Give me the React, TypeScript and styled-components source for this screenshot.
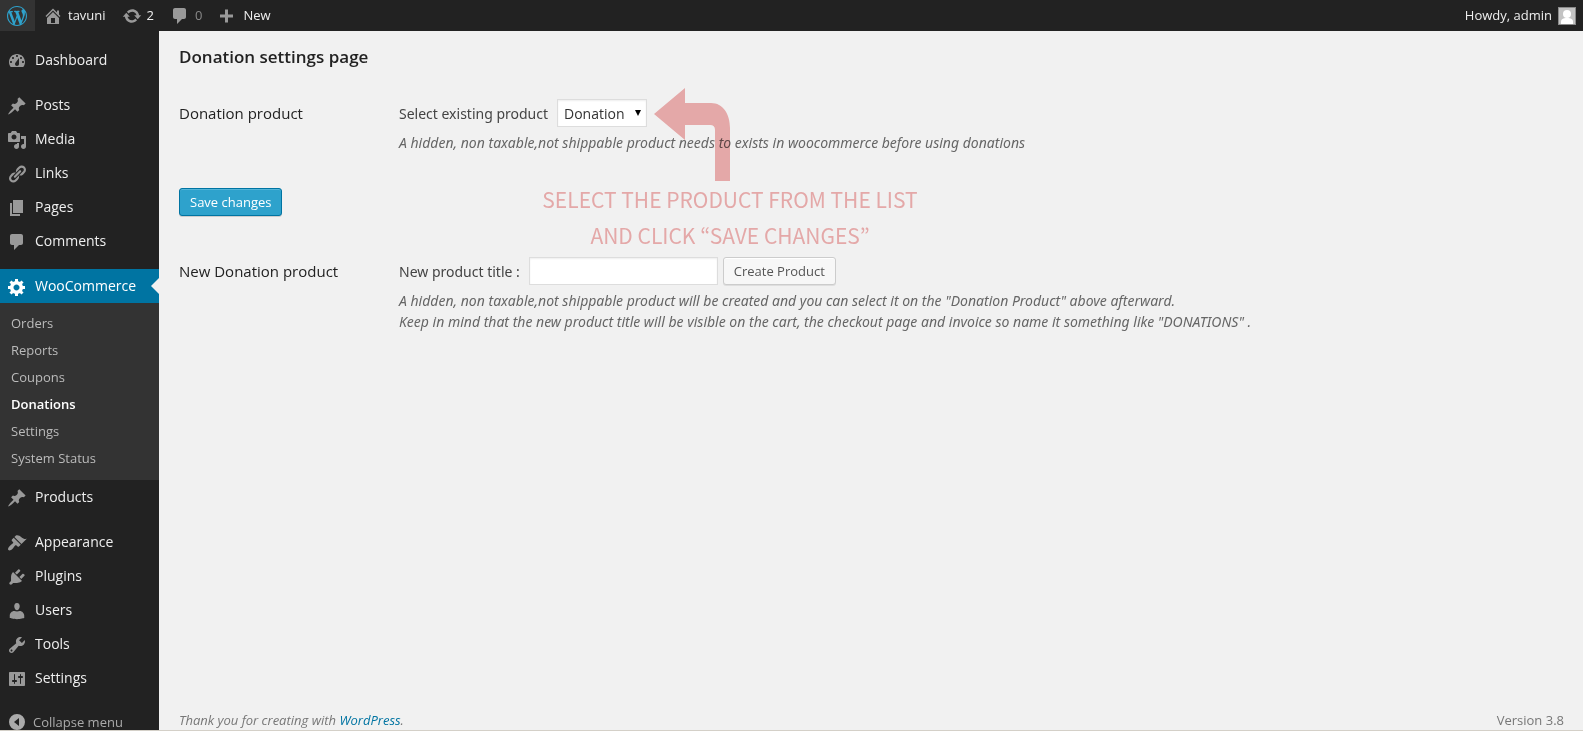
import React from "react";
import styled, { createGlobalStyle, css } from "styled-components";

const GlobalStyle = createGlobalStyle`
  *, *::before, *::after { box-sizing: border-box; }
  body {
    margin: 0;
    background: #f1f1f1;
    color: #444;
    font-family: "Open Sans", "Noto Sans", sans-serif;
    font-size: 14px;
    line-height: 21px;
  }
  a { text-decoration: none; }
  ul { list-style: none; margin: 0; padding: 0; }
`;

const paths = {
  wordpress:
    "M20 10c0-5.51-4.49-10-10-10C4.48 0 0 4.49 0 10c0 5.52 4.48 10 10 10 5.51 0 10-4.48 10-10zM7.78 15.37L4.37 6.22c.55-.02 1.17-.08 1.17-.08.5-.06.44-1.13-.06-1.11 0 0-1.45.11-2.37.11-.18 0-.37 0-.58-.01C4.12 2.69 6.87 1.11 10 1.11c2.33 0 4.45.87 6.05 2.34-.68-.11-1.65.39-1.65 1.58 0 .74.45 1.36.9 2.1.35.61.55 1.36.55 2.46 0 1.49-1.4 5-1.4 5l-3.03-8.37c.54-.02.82-.17.82-.17.5-.05.44-1.25-.06-1.22 0 0-1.44.12-2.38.12-.87 0-2.33-.12-2.33-.12-.5-.03-.56 1.2-.06 1.22l.92.08 1.26 3.41zM17.41 10c.24-.64.74-1.87.43-4.25.7 1.29 1.05 2.71 1.05 4.25 0 3.29-1.73 6.24-4.4 7.78.97-2.59 1.94-5.2 2.92-7.78zM6.1 18.09C3.12 16.65 1.11 13.53 1.11 10c0-1.3.23-2.48.72-3.59C3.25 10.3 4.67 14.2 6.1 18.09zm4.03-6.63l2.58 6.98c-.86.29-1.76.45-2.71.45-.79 0-1.57-.11-2.29-.33.81-2.38 1.62-4.74 2.42-7.1z",
  home: "M16 8.5l1.53 1.53-1.06 1.06L10 4.6l-6.47 6.49-1.06-1.06L10 2.5l4 4v-2h2v4zm-6-2.46l6 5.99V18H4v-5.97zM12 17v-5H8v5h4z",
  update:
    "M10.2 3.28c3.53 0 6.43 2.61 6.92 6h2.08l-3.5 4-3.5-4h2.32c-.45-1.97-2.21-3.45-4.32-3.45-1.45 0-2.73.71-3.54 1.78L4.95 5.66C6.23 4.2 8.11 3.28 10.2 3.28zm-.4 13.44c-3.52 0-6.43-2.61-6.92-6H.8l3.5-4c1.17 1.33 2.33 2.67 3.5 4H5.48c.45 1.97 2.21 3.45 4.32 3.45 1.45 0 2.73-.71 3.54-1.78l1.71 1.95c-1.28 1.46-3.15 2.38-5.25 2.38z",
  plus: "M15 8.5v3h-5v5H7v-5H2v-3h5v-5h3v5h5z",
  dashboard:
    "M3.76 16h12.48c1.1-1.37 1.76-3.11 1.76-5 0-4.42-3.58-8-8-8s-8 3.58-8 8c0 1.89.66 3.63 1.76 5zM10 4c.55 0 1 .45 1 1s-.45 1-1 1-1-.45-1-1 .45-1 1-1zM6 6c.55 0 1 .45 1 1s-.45 1-1 1-1-.45-1-1 .45-1 1-1zm8 0c.55 0 1 .45 1 1s-.45 1-1 1-1-.45-1-1 .45-1 1-1zm-5.37 5.55L12 7v6c0 1.1-.9 2-2 2s-2-.9-2-2c0-.57.24-1.08.63-1.45zM4 10c.55 0 1 .45 1 1s-.45 1-1 1-1-.45-1-1 .45-1 1-1zm12 0c.55 0 1 .45 1 1s-.45 1-1 1-1-.45-1-1 .45-1 1-1z",
  post: "M10.44 3.02l1.82-1.82 6.36 6.35-1.83 1.82c-1.05-.68-2.48-.57-3.41.36l-.75.75c-.92.93-1.04 2.35-.35 3.41l-1.83 1.82-2.41-2.41-2.8 2.79c-.42.42-3.38 2.71-3.8 2.29s1.86-3.39 2.28-3.81l2.79-2.79L4.1 9.36l1.83-1.82c1.05.69 2.48.57 3.4-.36l.75-.75c.93-.92 1.05-2.35.36-3.41z",
  media:
    "M13 11V4c0-.55-.45-1-1-1h-1.67L9 1H5L3.67 3H2c-.55 0-1 .45-1 1v7c0 .55.45 1 1 1h10c.55 0 1-.45 1-1zM7 4.5c1.38 0 2.5 1.12 2.5 2.5S8.38 9.5 7 9.5 4.5 8.38 4.5 7 5.62 4.5 7 4.5zM14 6h5v10.5c0 1.38-1.12 2.5-2.5 2.5S14 17.88 14 16.5s1.12-2.5 2.5-2.5c.17 0 .34.02.5.05V9h-3V6zm-4 8.05V13h2v3.5c0 1.38-1.12 2.5-2.5 2.5S7 17.88 7 16.5 8.12 14 9.5 14c.17 0 .34.02.5.05z",
  links:
    "M17.74 2.76c1.68 1.69 1.68 4.41 0 6.1l-1.53 1.52c-1.12 1.12-2.7 1.47-4.14 1.09l2.62-2.61.76-.77.76-.76c.84-.84.84-2.2 0-3.04-.84-.85-2.2-.85-3.04 0l-.77.76-3.38 3.38c-.37-1.44-.02-3.02 1.1-4.14l1.52-1.53c1.69-1.68 4.42-1.68 6.1 0zM8.59 13.43l5.34-5.34c.42-.42.42-1.1 0-1.52-.44-.43-1.13-.39-1.53 0l-5.33 5.34c-.42.42-.42 1.1 0 1.52.44.43 1.13.39 1.52 0zm-.76 2.29l4.14-4.15c.38 1.44.03 3.02-1.09 4.14l-1.52 1.53c-1.69 1.68-4.41 1.68-6.1 0-1.68-1.68-1.68-4.42 0-6.1l1.53-1.52c1.12-1.12 2.7-1.47 4.14-1.1l-4.14 4.15c-.85.84-.85 2.2 0 3.05.84.84 2.2.84 3.04 0z",
  page: "M6 15V2h10v13H6zm-1 1h8v2H3V5h2v11z",
  comments:
    "M5 2h9c1.1 0 2 .9 2 2v7c0 1.1-.9 2-2 2h-2l-5 5v-5H5c-1.1 0-2-.9-2-2V4c0-1.1.9-2 2-2z",
  generic:
    "M18 12h-2.18c-.17.7-.44 1.35-.81 1.93l1.54 1.54-2.1 2.1-1.54-1.54c-.58.36-1.23.63-1.91.79V19H8v-2.18c-.68-.16-1.33-.43-1.91-.79l-1.54 1.54-2.12-2.12 1.54-1.54c-.36-.58-.63-1.23-.79-1.91H1V9.03h2.17c.16-.7.44-1.35.8-1.94L2.43 5.55l2.1-2.1 1.54 1.54c.58-.37 1.24-.64 1.93-.81V2h3v2.18c.68.16 1.33.43 1.91.79l1.54-1.54 2.12 2.12-1.54 1.54c.36.59.64 1.24.8 1.94H18V12zm-8.5 1.5c1.66 0 3-1.34 3-3s-1.34-3-3-3-3 1.34-3 3 1.34 3 3 3z",
  appearance:
    "M14.48 11.06L7.41 3.99l1.5-1.5c.5-.56 2.3-.47 3.51.32 1.21.8 1.43 1.28 2.91 2.1 1.18.64 2.45 1.26 4.45.85zm-.71.71L6.7 4.7 4.93 6.47c-.39.39-.39 1.02 0 1.41l1.06 1.06c.39.39.39 1.03 0 1.42-.6.6-1.43 1.11-2.21 1.69-.35.26-.7.53-1.01.84C1.43 14.23.4 16.08 1.4 17.07c.99 1 2.84-.03 4.18-1.36.31-.31.58-.66.85-1.02.57-.78 1.08-1.61 1.69-2.21.39-.39 1.02-.39 1.41 0l1.06 1.06c.39.39 1.02.39 1.41 0z",
  plugins:
    "M13.11 4.36L9.87 7.6 8 5.73l3.24-3.24c.35-.34 1.05-.2 1.56.32.52.51.66 1.21.31 1.55zm-8 1.77l.91-1.12 9.01 9.01-1.19.84c-.71.71-2.63 1.16-3.82 1.16H6.14L4.9 17.26c-.59.59-1.54.59-2.12 0-.59-.58-.59-1.53 0-2.12l1.24-1.24v-3.88c0-1.13.4-3.19 1.09-3.89zm7.26 3.97l3.24-3.24c.34-.35 1.04-.21 1.55.31.52.51.66 1.21.31 1.55l-3.24 3.25z",
  users:
    "M10 9.25c-2.27 0-2.73-3.44-2.73-3.44C7 4.02 7.82 2 9.97 2c2.16 0 2.98 2.02 2.71 3.81 0 0-.41 3.44-2.68 3.44zM7.3 10L10 10.6 12.72 10c2.39 0 4.52 2.33 4.52 4.53v2.49s-3.65 1.13-7.24 1.13c-3.65 0-7.24-1.13-7.24-1.13v-2.49c0-2.25 1.94-4.48 4.54-4.53z",
  tools:
    "M16.68 9.77c-1.34 1.34-3.3 1.67-4.95.99l-5.41 6.52c-.99.99-2.59.99-3.58 0s-.99-2.59 0-3.57l6.52-5.42c-.68-1.65-.35-3.61.99-4.95 1.28-1.28 3.12-1.62 4.72-1.06l-2.89 2.89 2.82 2.82 2.86-2.87c.53 1.58.18 3.39-1.08 4.65zM3.81 16.21c.4.39 1.04.39 1.43 0 .4-.4.4-1.04 0-1.43-.39-.4-1.03-.4-1.43 0-.39.39-.39 1.03 0 1.43z",
  settings:
    "M18 16V4c0-.55-.45-1-1-1H3c-.55 0-1 .45-1 1v12c0 .55.45 1 1 1h14c.55 0 1-.45 1-1zM8 11h1c.55 0 1 .45 1 1s-.45 1-1 1H8v1.5c0 .28-.22.5-.5.5s-.5-.22-.5-.5V13H6c-.55 0-1-.45-1-1s.45-1 1-1h1V5.5c0-.28.22-.5.5-.5s.5.22.5.5V11zm5-2h-1c-.55 0-1-.45-1-1s.45-1 1-1h1V5.5c0-.28.22-.5.5-.5s.5.22.5.5V7h1c.55 0 1 .45 1 1s-.45 1-1 1h-1v5.5c0 .28-.22.5-.5.5s-.5-.22-.5-.5V9z",
  collapse:
    "M10 2a8 8 0 1 0 0 16a8 8 0 1 0 0-16zM12 6v8L7 10z",
};

type IconName = keyof typeof paths;

const IconSvg = styled.svg`
  flex: none;
  width: 20px;
  height: 20px;
  fill: currentColor;
  fill-rule: evenodd;
`;

const Icon = ({ name }: { name: IconName }) => (
  <IconSvg viewBox="0 0 20 20" aria-hidden="true">
    <path d={paths[name]} />
  </IconSvg>
);

const Shell = styled.div`
  display: flex;
  flex-direction: column;
  height: 100vh;
  overflow: hidden;
  border-bottom: 1px solid #d4d0c8;
`;

const AdminBar = styled.header`
  display: flex;
  flex: none;
  height: 31px;
  padding-right: 7px;
  background: #222;
  font-size: 13px;
`;

const BarLink = styled.a<{ $logo?: boolean; $dim?: boolean; $end?: boolean }>`
  display: flex;
  align-items: center;
  gap: 5px;
  padding: 0 8px;
  color: ${(p) => (p.$dim ? "#888" : "#eee")};
  svg { color: #999; }
  ${(p) =>
    p.$logo &&
    css`
      padding: 0 8px 0 7px;
      background: #333;
      svg { color: #2ea2cc; }
    `}
  ${(p) =>
    p.$end &&
    css`
      margin-left: auto;
      padding: 0;
      gap: 6px;
    `}
`;

const Avatar = styled.svg`
  width: 18px;
  height: 18px;
  background: #c3c3c3;
  border: 1px solid #8a8a8a;
`;

const Body = styled.div`
  display: flex;
  flex: 1;
  min-height: 0;
`;

const Sidebar = styled.nav`
  flex: none;
  width: 159px;
  padding-top: 12px;
  background: #222;
`;

const MenuGroup = styled.ul`
  margin-bottom: 11px;
`;

const MenuLink = styled.a<{ $current?: boolean }>`
  position: relative;
  display: flex;
  align-items: flex-start;
  gap: 8px;
  height: 34px;
  padding: 6px 7px 0;
  color: #eee;
  svg {
    margin-top: 2px;
    color: #999;
  }
  ${(p) =>
    p.$current &&
    css`
      background: #0074a2;
      color: #fff;
      svg { color: #fff; }
      &::after {
        content: "";
        position: absolute;
        top: 9px;
        right: 0;
        border: 8px solid transparent;
        border-left-width: 0;
        border-right-color: #f1f1f1;
      }
    `}
`;

const Submenu = styled.ul`
  padding: 7px 0 8px;
  background: #333;
`;

const SubLink = styled.a<{ $current?: boolean }>`
  display: block;
  padding: 0 11px;
  font-size: 13px;
  line-height: 27px;
  color: ${(p) => (p.$current ? "#fff" : "#bbb")};
  font-weight: ${(p) => (p.$current ? 600 : 400)};
`;

const CollapseButton = styled.button`
  display: flex;
  align-items: center;
  gap: 6px;
  height: 32px;
  padding: 0 7px;
  border: 0;
  background: none;
  color: #aaa;
  font: inherit;
  font-size: 13px;
`;

const Main = styled.div`
  display: flex;
  flex: 1;
  flex-direction: column;
  min-width: 0;
  padding: 13px 19px 0 20px;
`;

const PageTitle = styled.h1`
  margin: 0 0 29px;
  color: #222;
  font-size: 17px;
  font-weight: 600;
  line-height: 26px;
`;

const Settings = styled.main`
  position: relative;
  flex: 1;
`;

const Row = styled.section`
  display: grid;
  grid-template-columns: 220px 1fr;
`;

const RowTitle = styled.h2`
  margin: 0;
  color: #222;
  font-size: 15px;
  font-weight: 400;
  line-height: 28px;
`;

const Controls = styled.div`
  display: flex;
  align-items: center;
  gap: 5px;
  height: 28px;
  label {
    margin-right: 4px;
    font-family: "Noto Sans", "Open Sans", sans-serif;
  }
`;

const Description = styled.p`
  margin: 5px 0 0;
  color: #666;
  font-family: "Noto Sans", "Open Sans", sans-serif;
  font-style: italic;
`;

const SelectBox = styled.span`
  position: relative;
  display: inline-flex;
  svg {
    position: absolute;
    top: 11px;
    right: 6px;
    width: 6px;
    height: 6px;
    pointer-events: none;
  }
`;

const field = css`
  height: 28px;
  border: 1px solid #ddd;
  border-radius: 0;
  background: #fff;
  box-shadow: inset 0 1px 2px rgba(0, 0, 0, 0.07);
  color: #333;
  font: inherit;
`;

const Select = styled.select`
  ${field}
  appearance: none;
  width: 90px;
  padding: 0 6px;
`;

const TextInput = styled.input`
  ${field}
  width: 189px;
  padding: 3px 5px;
`;

const Button = styled.button<{ $primary?: boolean }>`
  height: 28px;
  padding: 0 10px;
  border: 1px solid ${(p) => (p.$primary ? "#0074a2" : "#ccc")};
  border-radius: 3px;
  background: ${(p) => (p.$primary ? "#2ea2cc" : "#f7f7f7")};
  box-shadow: ${(p) =>
    p.$primary
      ? "inset 0 1px 0 rgba(120, 200, 230, 0.5), 0 1px 0 rgba(0, 0, 0, 0.15)"
      : "inset 0 1px 0 #fff, 0 1px 0 rgba(0, 0, 0, 0.08)"};
  color: ${(p) => (p.$primary ? "#fff" : "#555")};
  font: inherit;
  font-size: 13px;
`;

const Actions = styled.div`
  margin: 35px 0 41px;
`;

const Callout = styled.div`
  position: absolute;
  top: -11px;
  left: 341px;
  width: 420px;
  color: #f2b2b2;
  mix-blend-mode: multiply;
  pointer-events: none;
`;

const CalloutArrow = styled.svg`
  display: block;
  width: 76px;
  height: 93px;
  margin-left: 134px;
  fill: currentColor;
`;

const CalloutText = styled.p`
  margin: 0;
  font-family: "Noto Sans CJK KR", "Open Sans", sans-serif;
  font-size: 21px;
  line-height: 36px;
  text-align: center;
  white-space: nowrap;
`;

const Footer = styled.footer`
  display: flex;
  justify-content: space-between;
  height: 20px;
  color: #777;
  font-size: 13px;
  a { color: #0074a2; }
`;

type MenuItem = { icon: IconName; label: string; children?: string[] };

const menu: MenuItem[][] = [
  [{ icon: "dashboard", label: "Dashboard" }],
  [
    { icon: "post", label: "Posts" },
    { icon: "media", label: "Media" },
    { icon: "links", label: "Links" },
    { icon: "page", label: "Pages" },
    { icon: "comments", label: "Comments" },
  ],
  [
    {
      icon: "generic",
      label: "WooCommerce",
      children: ["Orders", "Reports", "Coupons", "Donations", "Settings", "System Status"],
    },
    { icon: "post", label: "Products" },
  ],
  [
    { icon: "appearance", label: "Appearance" },
    { icon: "plugins", label: "Plugins" },
    { icon: "users", label: "Users" },
    { icon: "tools", label: "Tools" },
    { icon: "settings", label: "Settings" },
  ],
];

export default function App() {
  return (
    <>
      <GlobalStyle />
      <Shell>
        <AdminBar>
          <BarLink href="#" $logo aria-label="About WordPress">
            <Icon name="wordpress" />
          </BarLink>
          <BarLink href="#"><Icon name="home" />tavuni</BarLink>
          <BarLink href="#"><Icon name="update" />2</BarLink>
          <BarLink href="#" $dim><Icon name="comments" />0</BarLink>
          <BarLink href="#"><Icon name="plus" />New</BarLink>
          <BarLink href="#" $end>
            Howdy, admin
            <Avatar viewBox="0 0 16 16" aria-hidden="true">
              <circle cx="8" cy="6" r="4" fill="#fff" />
              <path d="M2 16v-2c0-3 2-4 6-4s6 1 6 4v2z" fill="#fff" />
            </Avatar>
          </BarLink>
        </AdminBar>
        <Body>
          <Sidebar aria-label="Main menu">
            {menu.map((group, i) => (
              <MenuGroup key={i}>
                {group.map((item) => (
                  <li key={item.label}>
                    <MenuLink href="#" $current={!!item.children}>
                      <Icon name={item.icon} />
                      {item.label}
                    </MenuLink>
                    {item.children && (
                      <Submenu>
                        {item.children.map((label) => (
                          <li key={label}>
                            <SubLink href="#" $current={label === "Donations"}>{label}</SubLink>
                          </li>
                        ))}
                      </Submenu>
                    )}
                  </li>
                ))}
              </MenuGroup>
            ))}
            <CollapseButton type="button">
              <Icon name="collapse" />
              Collapse menu
            </CollapseButton>
          </Sidebar>
          <Main>
            <PageTitle>Donation settings page</PageTitle>
            <Settings>
              <Row>
                <RowTitle>Donation product</RowTitle>
                <div>
                  <Controls>
                    <label htmlFor="product">Select existing product</label>
                    <SelectBox>
                      <Select id="product" defaultValue="Donation">
                        <option>Donation</option>
                      </Select>
                      <svg viewBox="0 0 6 6" aria-hidden="true"><path d="M0 0h6L3 6z" /></svg>
                    </SelectBox>
                  </Controls>
                  <Description>
                    A hidden, non taxable,not shippable product needs to exists in woocommerce before using donations
                  </Description>
                </div>
              </Row>
              <Actions>
                <Button type="button" $primary>Save changes</Button>
              </Actions>
              <Row>
                <RowTitle>New Donation product</RowTitle>
                <div>
                  <Controls>
                    <label htmlFor="title">New product title :</label>
                    <TextInput id="title" type="text" />
                    <Button type="button">Create Product</Button>
                  </Controls>
                  <Description>
                    A hidden, non taxable,not shippable product will be created and you can select it on the "Donation Product" above afterward.
                    <br />
                    Keep in mind that the new product title will be visible on the cart, the checkout page and invoice so name it something like "DONATIONS" .
                  </Description>
                </div>
              </Row>
              <Callout>
                <CalloutArrow viewBox="0 0 76 93" aria-hidden="true">
                  <path d="M0 26L31 0V15H57C69 15 76 26 76 40V93H61V42Q61 37 56 37H31V52z" />
                </CalloutArrow>
                <CalloutText>
                  SELECT THE PRODUCT FROM THE LIST
                  <br />
                  AND CLICK “SAVE CHANGES”
                </CalloutText>
              </Callout>
            </Settings>
            <Footer>
              <em>Thank you for creating with <a href="#">WordPress</a>.</em>
              <span>Version 3.8</span>
            </Footer>
          </Main>
        </Body>
      </Shell>
    </>
  );
}
